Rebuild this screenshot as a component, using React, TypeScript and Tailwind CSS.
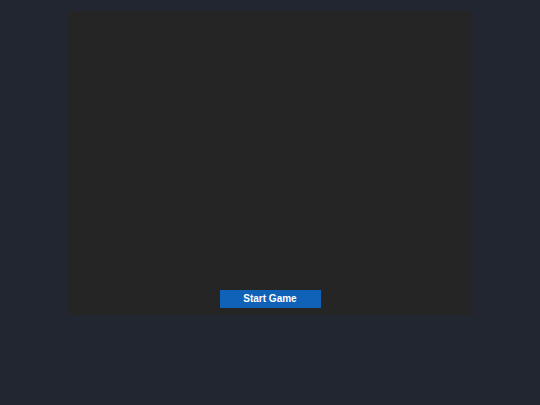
export default function App() {
  return (
    <div className="min-h-screen w-full bg-[#222631] pt-[11px] font-['Liberation_Sans',Arial,sans-serif]">
      <div className="mx-auto flex h-[304px] w-[404px] flex-col items-center justify-end bg-[#252525] pb-[7px]">
        <button className="h-[18px] w-[101px] bg-[#0f62b8] text-[10px] font-bold leading-none text-white">
          Start Game
        </button>
      </div>
    </div>
  );
}
